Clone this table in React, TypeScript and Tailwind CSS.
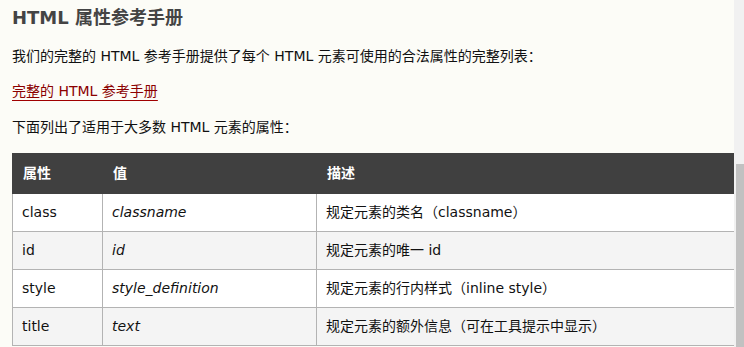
import React from "react";

const rows = [
  { attr: "class", value: "classname", desc: "规定元素的类名（classname）" },
  { attr: "id", value: "id", desc: "规定元素的唯一 id" },
  { attr: "style", value: "style_definition", desc: "规定元素的行内样式（inline style）" },
  { attr: "title", value: "text", desc: "规定元素的额外信息（可在工具提示中显示）" },
];

export default function App() {
  return (
    <div className="flex h-[347px] w-[744px] overflow-hidden bg-[#fcfcf7] font-['DejaVu_Sans','Noto_Sans_CJK_SC',sans-serif] text-[14px] text-[#111]">
      <main className="min-w-0 flex-1 overflow-hidden pl-3">
        <h2 className="mt-[6px] text-[18px] font-bold leading-[24px] text-[#444]">HTML 属性参考手册</h2>
        <p className="mt-[15px] leading-[22px]">
          我们的完整的 HTML 参考手册提供了每个 HTML 元素可使用的合法属性的完整列表：
        </p>
        <p className="mt-[13px] leading-[22px]">
          <a
            href="#"
            className="text-[#8b0000] underline decoration-[#a00000] underline-offset-[4px]"
          >
            完整的 HTML 参考手册
          </a>
        </p>
        <p className="mt-[14px] leading-[22px]">下面列出了适用于大多数 HTML 元素的属性：</p>

        <div className="mt-[15px] w-[723px]">
          <div className="grid h-[41px] grid-cols-[90px_214px_1fr] items-center bg-[#404040] font-bold text-white">
            <div className="pl-[11px]">属性</div>
            <div className="pl-[11px]">值</div>
            <div className="pl-[11px]">描述</div>
          </div>
          {rows.map((r, i) => (
            <div
              key={r.attr}
              className={
                "grid h-[38px] grid-cols-[90px_214px_1fr] border-b border-l border-[#b3b3b3] " +
                (i % 2 === 0 ? "bg-white" : "bg-[#f4f4f4]")
              }
            >
              <div className="flex items-center border-r border-[#b3b3b3] pl-[9px]">{r.attr}</div>
              <div className="flex items-center border-r border-[#b3b3b3] pl-[9px] italic">{r.value}</div>
              <div className="flex items-center pl-[9px]">{r.desc}</div>
            </div>
          ))}
        </div>
      </main>

      <div className="w-[10px] shrink-0 bg-[#f1f1f1] pl-[2px] pt-[164px]">
        <div className="h-full w-[8px] bg-[#c1c1c1]" />
      </div>
    </div>
  );
}
